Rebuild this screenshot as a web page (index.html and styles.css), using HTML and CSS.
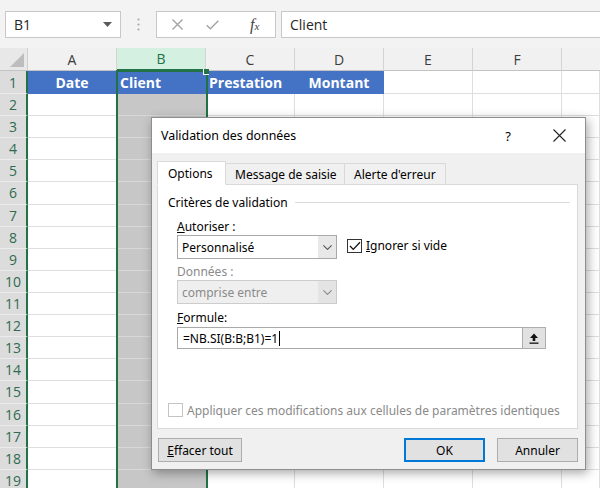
FILE: index.html
```html
<!DOCTYPE html>
<html lang="fr">
<head>
<meta charset="utf-8">
<title>Validation des données</title>
<link rel="stylesheet" href="styles.css">
</head>
<body>
<div class="toolbar">
  <div class="namebox"><span>B1</span><svg class="nb-arrow" width="9" height="5" viewBox="0 0 9 5"><path d="M0 0H9L4.5 5Z" fill="#5a5a5a"/></svg></div>
  <div class="grip"><svg width="3" height="13" viewBox="0 0 3 13"><circle cx="1.5" cy="1.5" r="1.1" fill="#a8a8a8"/><circle cx="1.5" cy="6.5" r="1.1" fill="#a8a8a8"/><circle cx="1.5" cy="11.5" r="1.1" fill="#a8a8a8"/></svg></div>
  <div class="fxgroup">
    <svg class="ic-x" width="11" height="11" viewBox="0 0 11 11"><path d="M0.5 0.5L10.5 10.5M10.5 0.5L0.5 10.5" stroke="#a3a3a3" stroke-width="1.4"/></svg>
    <svg class="ic-ok" width="13" height="10" viewBox="0 0 13 10"><path d="M0.7 5.2L4.4 8.8L12.3 0.7" stroke="#a3a3a3" stroke-width="1.4" fill="none"/></svg>
    <span class="fx"><i>f</i><span class="fxx">x</span></span>
  </div>
  <div class="formula">Client</div>
</div>

<div class="sheet">
  <div class="corner"><svg width="14" height="14" viewBox="0 0 14 14"><path d="M14 0V14H0Z" fill="#bdbdbd"/></svg></div>
  <div class="ch">A</div><div class="ch ch-sel">B</div><div class="ch">C</div><div class="ch">D</div><div class="ch">E</div><div class="ch">F</div><div class="ch last"></div>

  <div class="rh">1</div><div class="c hd center">Date</div><div class="c hd">Client</div><div class="c hd">Prestation</div><div class="c hd center">Montant</div><div class="c"></div><div class="c"></div><div class="c"></div>
  <div class="rh">2</div><div class="c"></div><div class="c b"></div><div class="c"></div><div class="c"></div><div class="c"></div><div class="c"></div><div class="c"></div>
  <div class="rh">3</div><div class="c"></div><div class="c b"></div><div class="c"></div><div class="c"></div><div class="c"></div><div class="c"></div><div class="c"></div>
  <div class="rh">4</div><div class="c"></div><div class="c b"></div><div class="c"></div><div class="c"></div><div class="c"></div><div class="c"></div><div class="c"></div>
  <div class="rh">5</div><div class="c"></div><div class="c b"></div><div class="c"></div><div class="c"></div><div class="c"></div><div class="c"></div><div class="c"></div>
  <div class="rh">6</div><div class="c"></div><div class="c b"></div><div class="c"></div><div class="c"></div><div class="c"></div><div class="c"></div><div class="c"></div>
  <div class="rh">7</div><div class="c"></div><div class="c b"></div><div class="c"></div><div class="c"></div><div class="c"></div><div class="c"></div><div class="c"></div>
  <div class="rh">8</div><div class="c"></div><div class="c b"></div><div class="c"></div><div class="c"></div><div class="c"></div><div class="c"></div><div class="c"></div>
  <div class="rh">9</div><div class="c"></div><div class="c b"></div><div class="c"></div><div class="c"></div><div class="c"></div><div class="c"></div><div class="c"></div>
  <div class="rh">10</div><div class="c"></div><div class="c b"></div><div class="c"></div><div class="c"></div><div class="c"></div><div class="c"></div><div class="c"></div>
  <div class="rh">11</div><div class="c"></div><div class="c b"></div><div class="c"></div><div class="c"></div><div class="c"></div><div class="c"></div><div class="c"></div>
  <div class="rh">12</div><div class="c"></div><div class="c b"></div><div class="c"></div><div class="c"></div><div class="c"></div><div class="c"></div><div class="c"></div>
  <div class="rh">13</div><div class="c"></div><div class="c b"></div><div class="c"></div><div class="c"></div><div class="c"></div><div class="c"></div><div class="c"></div>
  <div class="rh">14</div><div class="c"></div><div class="c b"></div><div class="c"></div><div class="c"></div><div class="c"></div><div class="c"></div><div class="c"></div>
  <div class="rh">15</div><div class="c"></div><div class="c b"></div><div class="c"></div><div class="c"></div><div class="c"></div><div class="c"></div><div class="c"></div>
  <div class="rh">16</div><div class="c"></div><div class="c b"></div><div class="c"></div><div class="c"></div><div class="c"></div><div class="c"></div><div class="c"></div>
  <div class="rh">17</div><div class="c"></div><div class="c b"></div><div class="c"></div><div class="c"></div><div class="c"></div><div class="c"></div><div class="c"></div>
  <div class="rh">18</div><div class="c"></div><div class="c b"></div><div class="c"></div><div class="c"></div><div class="c"></div><div class="c"></div><div class="c"></div>
  <div class="rh">19</div><div class="c"></div><div class="c b"></div><div class="c"></div><div class="c"></div><div class="c"></div><div class="c"></div><div class="c"></div>

  <div class="selection"></div>
  <div class="handle"></div>
</div>

<div class="dialog">
  <div class="titlebar">
    <span class="title">Validation des données</span>
    <span class="help">?</span>
    <svg class="close" width="13" height="13" viewBox="0 0 13 13"><path d="M0.5 0.5L12.5 12.5M12.5 0.5L0.5 12.5" stroke="#222" stroke-width="1.1"/></svg>
  </div>
  <div class="dbody">
    <div class="tabs">
      <div class="tab tab-opt active">Options</div>
      <div class="tab tab-msg">Message de saisie</div>
      <div class="tab tab-err">Alerte d'erreur</div>
    </div>
    <div class="panel">
      <div class="legend"><span>Critères de validation</span><div class="rule"></div></div>
      <div class="group">
        <div class="lbl lbl-first"><u>A</u>utoriser :</div>
        <div class="row">
          <div class="combo"><span class="val">Personnalisé</span><div class="drop"><svg width="9" height="5" viewBox="0 0 9 5"><path d="M0.4 0.4L4.5 4.4L8.6 0.4" stroke="#555" stroke-width="1.1" fill="none"/></svg></div></div>
          <div class="check"><span class="box"><svg width="12" height="10" viewBox="0 0 12 10"><path d="M1 5L4.3 8.4L11 1.2" stroke="#111" stroke-width="1.3" fill="none"/></svg></span><span><u>I</u>gnorer si vide</span></div>
        </div>
        <div class="lbl lbl-dis">Données :</div>
        <div class="combo disabled"><span class="val">comprise entre</span><div class="drop"><svg width="9" height="5" viewBox="0 0 9 5"><path d="M0.4 0.4L4.5 4.4L8.6 0.4" stroke="#8a8a8a" stroke-width="1.1" fill="none"/></svg></div></div>
        <div class="lbl lbl-f"><u>F</u>ormule:</div>
        <div class="input"><span class="val">=NB.SI(B:B;B1)=1<span class="caret"></span></span><div class="pick"><svg width="10" height="11" viewBox="0 0 10 11"><path d="M5 0.5L9 5H6.3V8H3.7V5H1Z" fill="#111"/><rect x="0.5" y="9.5" width="9" height="1.3" fill="#111"/></svg></div></div>
      </div>
      <div class="apply"><span class="box box-dis"></span><span>Appliquer ces modifications aux cellules de paramètres identiques</span></div>
    </div>
    <div class="buttons">
      <div class="btn btn-clear"><u>E</u>ffacer tout</div>
      <div class="spacer"></div>
      <div class="btn btn-ok">OK</div>
      <div class="btn">Annuler</div>
    </div>
  </div>
</div>
</body>
</html>
```

FILE: styles.css
```css
* { box-sizing: border-box; }
html, body { margin: 0; padding: 0; }
body {
  width: 600px;
  height: 488px;
  overflow: hidden;
  position: relative;
  background: #ffffff;
  font-family: "Open Sans", "Noto Sans", sans-serif;
  color: #222;
}

/* ---------- formula bar ---------- */
.toolbar {
  display: flex;
  align-items: flex-start;
  height: 48px;
  padding: 11px 0 0 5px;
  background: #f3f3f3;
}
.namebox {
  width: 116px;
  height: 27px;
  background: #fff;
  border: 1px solid #c8c8c8;
  display: flex;
  align-items: center;
  justify-content: space-between;
  padding: 0 8px 0 8px;
  font-size: 14px;
  color: #262626;
}
.grip {
  width: 35px;
  height: 27px;
  display: flex;
  align-items: center;
  justify-content: center;
}
.fxgroup {
  width: 120px;
  height: 27px;
  background: #fff;
  border: 1px solid #c8c8c8;
  display: flex;
  align-items: center;
  padding-left: 15px;
}
.ic-ok { margin-left: 23px; }
.fx {
  margin-left: 31px;
  font-family: "Liberation Serif", serif;
  font-size: 16px;
  color: #444;
  line-height: 1;
}
.fx i { font-style: italic; }
.fxx { font-style: italic; font-size: 11px; }
.formula {
  flex: 1;
  height: 27px;
  margin-left: 5px;
  background: #fff;
  border: 1px solid #c8c8c8;
  border-right: none;
  display: flex;
  align-items: center;
  padding-left: 8px;
  font-size: 14px;
  color: #262626;
}

/* ---------- sheet grid ---------- */
.sheet {
  position: relative;
  display: grid;
  grid-template-columns: 28px repeat(6, 89px) 1fr;
  grid-template-rows: 23px 23px repeat(18, 22.12px);
  font-size: 13px;
}
.corner {
  background: #e8e8e8;
  border-right: 1px solid #cfcfcf;
  border-bottom: 1px solid #c3c3c3;
  display: flex;
  align-items: flex-end;
  justify-content: flex-end;
  padding: 0 3px 3px 0;
}
.ch {
  background: #f1f1f1;
  border-right: 1px solid #d4d4d4;
  border-bottom: 1px solid #c3c3c3;
  display: flex;
  align-items: center;
  justify-content: center;
  font-size: 14px;
  color: #3c3c3c;
}
.ch.last { border-right: none; }
.ch-sel {
  background: #d3f0e0;
  color: #217346;
  border-bottom: 2px solid #217346;
}
.rh {
  background: #dcdcdc;
  border-right: 2px solid #217346;
  border-bottom: 1px solid #ebebeb;
  display: flex;
  align-items: center;
  justify-content: center;
  font-size: 14px;
  color: #2f6b50;
}
.c {
  border-right: 1px solid #dedede;
  border-bottom: 1px solid #dedede;
  display: flex;
  align-items: center;
  padding-left: 3px;
  white-space: nowrap;
  overflow: hidden;
}
.c.b {
  background: #c7c7c7;
  border-bottom-color: #d8d8d8;
  border-right-color: #c7c7c7;
}
.c.hd {
  background: #4472c4;
  border-color: #4472c4;
  color: #fff;
  font-weight: 700;
  font-size: 14px;
}
.c.center { justify-content: center; padding-left: 0; }

.selection {
  position: absolute;
  left: 116px;
  top: 22px;
  width: 92px;
  bottom: -4px;
  border: 2px solid #217346;
  pointer-events: none;
}
.handle {
  position: absolute;
  left: 203px;
  top: 21px;
  width: 6px;
  height: 6px;
  background: #217346;
  border-left: 1px solid #fff;
  border-bottom: 1px solid #fff;
}

/* ---------- dialog ---------- */
.dialog {
  position: absolute;
  left: 151px;
  top: 117px;
  width: 435px;
  height: 353px;
  border: 1px solid #8e8e8e;
  background: #f0f0f0;
  box-shadow: 2px 3px 10px rgba(0, 0, 0, 0.35);
  font-family: "Noto Sans", "Open Sans", sans-serif;
  font-size: 12px;
  color: #000;
  display: flex;
  flex-direction: column;
}
.titlebar {
  height: 35px;
  background: #fff;
  display: flex;
  align-items: center;
  padding-left: 9px;
  flex-shrink: 0;
}
.title { flex: 1; font-size: 12.4px; }
.help { font-size: 13px; margin-right: 42px; }
.close { margin-right: 19px; }

.dbody {
  flex: 1;
  padding: 8px 7px 7px 5px;
  display: flex;
  flex-direction: column;
}
.tabs {
  display: flex;
  align-items: flex-end;
  height: 24px;
  margin-bottom: -1px;
  position: relative;
  z-index: 1;
}
.tab {
  height: 22px;
  padding-left: 9px;
  border: 1px solid #d9d9d9;
  border-left: none;
  background: #f0f0f0;
  display: flex;
  align-items: center;
  white-space: nowrap;
}
.tab-opt { width: 69px; }
.tab-msg { width: 119px; }
.tab-err { width: 101px; }
.tab.active {
  height: 24px;
  background: #fff;
  border-left: 1px solid #d9d9d9;
  border-bottom-color: #fff;
  padding-left: 10px;
}
.panel {
  background: #fff;
  border: 1px solid #d9d9d9;
  padding: 9px 7px 10px 10px;
  height: 245px;
}
.legend {
  display: flex;
  align-items: center;
  height: 16px;
}
.rule {
  flex: 1;
  height: 1px;
  background: #dcdcdc;
  margin-left: 7px;
}
.group { padding-left: 9px; }
.lbl {
  height: 16px;
  display: flex;
  align-items: center;
}
.lbl-first { margin-top: 8px; margin-bottom: 1px; }
.lbl-dis { margin-top: 4px; margin-bottom: 1px; color: #8a8a8a; }
.lbl-f { margin-top: 5px; margin-bottom: 2px; }
.row { display: flex; align-items: flex-start; }
.combo {
  width: 160px;
  height: 24px;
  background: #fff;
  border: 1px solid #a9a9a9;
  display: flex;
  align-items: center;
}
.combo .val { flex: 1; padding-left: 4px; }
.drop {
  width: 18px;
  height: 22px;
  background: #e8e8e8;
  display: flex;
  align-items: center;
  justify-content: center;
}
.combo.disabled {
  background: #efefef;
  border-color: #cccccc;
  color: #8a8a8a;
}
.combo.disabled .drop { background: #e4e4e4; }
.check {
  display: flex;
  align-items: center;
  margin-left: 10px;
  margin-top: 2px;
}
.box {
  width: 15px;
  height: 14px;
  border: 1px solid #333;
  background: #fff;
  display: flex;
  align-items: center;
  justify-content: center;
  margin-right: 4px;
}
.box-dis { border-color: #c4c4c4; }
.input {
  width: 369px;
  height: 22px;
  background: #fff;
  border: 1px solid #a9a9a9;
  display: flex;
  align-items: center;
}
.input .val { flex: 1; padding-left: 5px; display: flex; align-items: center; }
.caret {
  display: inline-block;
  width: 1px;
  height: 15px;
  background: #000;
  margin-left: 1px;
}
.pick {
  width: 24px;
  height: 22px;
  margin: -1px -1px -1px 0;
  background: #e1e1e1;
  border: 1px solid #adadad;
  display: flex;
  align-items: center;
  justify-content: center;
}
.apply {
  display: flex;
  align-items: center;
  height: 16px;
  margin-top: 53px;
  color: #8a8a8a;
  white-space: nowrap;
}
.buttons {
  display: flex;
  margin-top: 9px;
  padding-left: 1px;
}
.spacer { flex: 1; }
.btn {
  width: 81px;
  height: 24px;
  background: #e1e1e1;
  border: 1px solid #adadad;
  display: flex;
  align-items: center;
  justify-content: center;
}
.btn-clear { width: 84px; }
.btn-ok {
  border: 2px solid #0078d7;
  margin-right: 12px;
}
```
